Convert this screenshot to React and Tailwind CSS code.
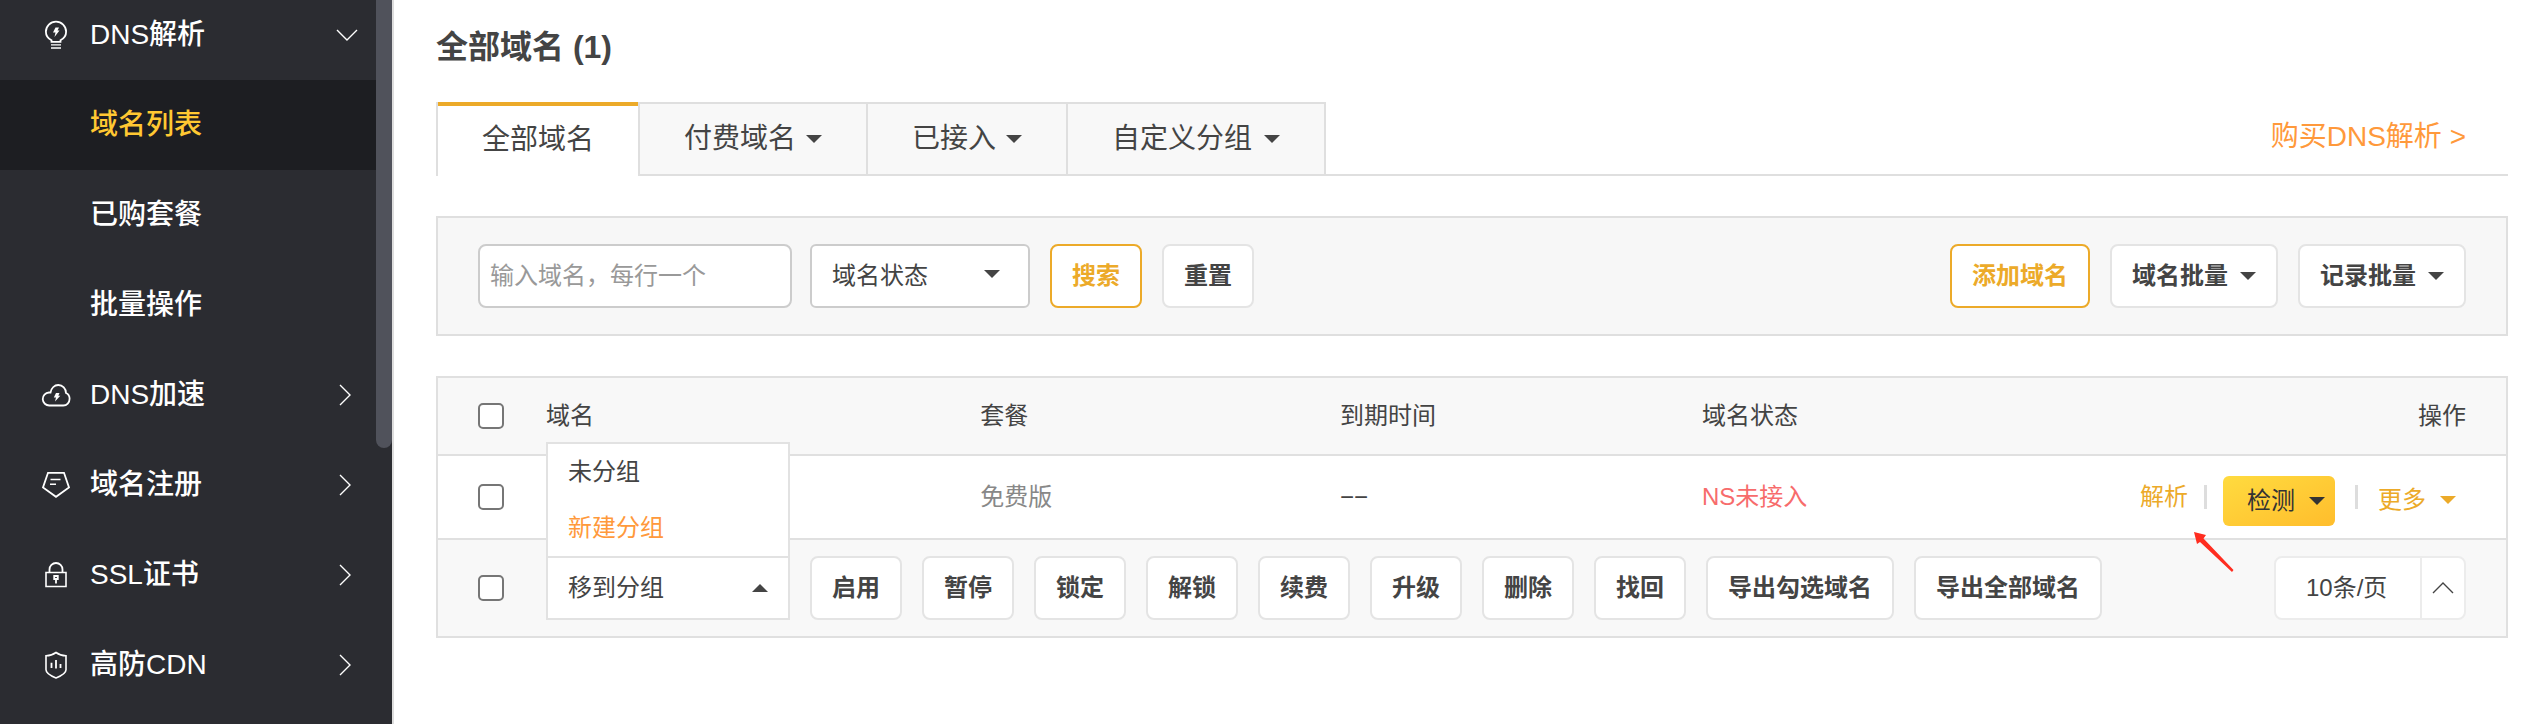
import React, { useState } from 'react'

const Caret = ({ up, className = '' }) => (
  <svg viewBox="0 0 16 8" className={`w-4 h-2 shrink-0 fill-current ${className}`} aria-hidden="true">
    <path d={up ? 'M0 8h16L8 0z' : 'M0 0h16L8 8z'} />
  </svg>
)

const Chevron = ({ points, className }) => (
  <svg viewBox="0 0 22 22" className={className} fill="none" stroke="currentColor" strokeWidth="1.4" aria-hidden="true">
    <polyline points={points} />
  </svg>
)

const Icon = ({ children }) => (
  <svg viewBox="0 0 30 30" className="size-[30px] mr-[19px]" fill="none" stroke="currentColor" strokeWidth="1.8" aria-hidden="true">
    {children}
  </svg>
)

const BulbIcon = () => (
  <Icon>
    <path d="M10.5 21.8v-1.6c-3.4-1.7-5.6-4.8-5.6-8.5a10.1 10.1 0 0 1 20.2 0c0 3.7-2.2 6.8-5.6 8.5v1.6z" />
    <path d="M10 24.8h10M10 28h10" strokeWidth="1.3" />
    <path d="M14.5 7.5h3.5l-1.5 3h2l-5 6.5 1-4.5h-2.5z" fill="currentColor" stroke="none" />
  </Icon>
)

const CloudIcon = () => (
  <Icon>
    <path d="M8.5 25.500a6.500 6.500 0 0 1-.5-13h1.500c.8-4.500 4-7.500 7.800-7.500 4.300 0 7.700 3.600 7.700 8 2.400 1 3.600 3.200 3.600 5.800 0 3.800-2.800 6.700-6.300 6.700z" />
    <path d="M15 13h3.500l-1.200 2.800h2L14 21.500l1-4h-2.200z" fill="currentColor" stroke="none" />
  </Icon>
)

const DomainIcon = () => (
  <Icon>
    <path d="M7 2.800h16l5 14.700L15 26.800 2 17.500z" />
    <path d="M9.500 9.500h10M9 14.200h6" strokeWidth="1.5" />
  </Icon>
)

const LockIcon = () => (
  <Icon>
    <path d="M5 12.500h20v14H5z" strokeWidth="1.6" />
    <path d="M8.500 12V9.500a6.500 6.500 0 0 1 13 0V12" />
    <path d="M13.200 16h3.600v3h-3.600zM15 19v4.500" />
  </Icon>
)

const ShieldIcon = () => (
  <Icon>
    <path d="M15 2.500c3 2.200 6.400 3.300 10 3.300v14c0 3.500-4.500 6-10 8.200-5.500-2.200-10-4.700-10-8.200v-14c3.600 0 7-1.100 10-3.300z" strokeWidth="1.6" />
    <path d="M10.500 12.800V18M15 10v8.500M19.500 14v4" />
  </Icon>
)

const menu = [
  { label: 'DNS加速', icon: CloudIcon },
  { label: '域名注册', icon: DomainIcon },
  { label: 'SSL证书', icon: LockIcon },
  { label: '高防CDN', icon: ShieldIcon },
]

const subMenu = ['域名列表', '已购套餐', '批量操作']

const tabs = [
  { label: '付费域名', gap: 'gap-2.5' },
  { label: '已接入', gap: 'gap-2.5' },
  { label: '自定义分组', gap: 'gap-3' },
]

const actions = ['启用', '暂停', '锁定', '解锁', '续费', '升级', '删除', '找回', '导出勾选域名', '导出全部域名']

const Button = ({ children, primary }) => (
  <button
    type="button"
    className={`h-16 px-5 flex items-center gap-3 shrink-0 whitespace-nowrap rounded-lg border-2 bg-white font-semibold ${
      primary ? 'border-[#ecaa29] text-[#ecaa29]' : 'border-[#e4e4e4]'
    }`}
  >
    {children}
  </button>
)

const Checkbox = ({ label }) => (
  <input
    type="checkbox"
    aria-label={label}
    className="block size-[26px] ml-10 appearance-none rounded-[5px] border-2 border-[#767676] bg-white checked:bg-[#ecaa29]"
  />
)

const Sidebar = () => (
  <aside className="flex shrink-0 bg-[#2b2c31] border-r-2 border-[#dddddd] text-white text-[28px] font-medium">
    <nav className="w-[376px]">
      <button type="button" className="w-full h-20 pl-[41px] pr-[18px] pb-2.5 flex items-center">
        <BulbIcon />
        DNS解析
        <Chevron points="1,6 11,16 21,6" className="size-[22px] ml-auto" />
      </button>
      {subMenu.map((item) => (
        <a
          key={item}
          href="#"
          className={`h-[90px] pl-[90px] flex items-center ${item === '域名列表' ? 'bg-[#1d1e22] text-[#ffc832]' : ''}`}
        >
          {item}
        </a>
      ))}
      {menu.map(({ label, icon: ItemIcon }) => (
        <button key={label} type="button" className="w-full h-[90px] pl-[41px] pr-5 flex items-center">
          <ItemIcon />
          {label}
          <Chevron points="6,1 16,11 6,21" className="size-[22px] ml-auto" />
        </button>
      ))}
    </nav>
    <div className="w-4 h-[448px] rounded-b-lg bg-[#50525b]" />
  </aside>
)

const Filters = () => (
  <form className="mt-10 h-[120px] px-10 flex items-center gap-5 border-2 border-[#dfdfdf] bg-[#f7f7f7]">
    <div className="flex gap-[18px]">
      <input
        type="text"
        aria-label="域名"
        placeholder="输入域名，每行一个"
        className="w-[314px] h-16 px-2.5 rounded-lg border-2 border-[#cccccc] bg-white placeholder:text-[#999999]"
      />
      <div className="relative">
        <select aria-label="域名状态" className="w-[220px] h-16 px-5 appearance-none rounded-md border-2 border-[#cccccc] bg-white">
          <option>域名状态</option>
        </select>
        <Caret className="absolute right-[30px] top-[26px] pointer-events-none" />
      </div>
    </div>
    <Button primary>搜索</Button>
    <Button>重置</Button>
    <div className="ml-auto flex gap-5">
      <Button primary>添加域名</Button>
      <Button>域名批量<Caret /></Button>
      <Button>记录批量<Caret /></Button>
    </div>
  </form>
)

const GroupSelect = () => {
  const [open, setOpen] = useState(true)

  return (
    <div className="relative w-[244px] shrink-0">
      <button
        type="button"
        aria-expanded={open}
        onClick={() => setOpen(!open)}
        className="w-full h-16 px-5 flex items-center justify-between border-2 border-[#e2e2e2] bg-white"
      >
        移到分组
        <Caret up={open} />
      </button>
      {open && (
        <ul className="absolute inset-x-0 bottom-[62px] border-2 border-[#e2e2e2] bg-white">
          <li><button type="button" className="w-full h-14 px-5 text-left">未分组</button></li>
          <li><button type="button" className="w-full h-14 px-5 text-left text-[#ff993b]">新建分组</button></li>
        </ul>
      )}
    </div>
  )
}

const DomainTable = () => (
  <div className="mt-10 border-2 border-[#e0e0e0]">
    <table className="w-full table-fixed border-separate border-spacing-0 text-left">
      <colgroup>
        <col className="w-[108px]" />
        <col className="w-[21%]" />
        <col className="w-[17.4%]" />
        <col className="w-[17.5%]" />
        <col />
        <col />
      </colgroup>
      <thead className="bg-[#f8f8f8]">
        <tr className="[&>th]:h-[78px] [&>th]:p-0 [&>th]:border-b-2 [&>th]:border-[#e0e0e0] [&>th]:font-normal">
          <th><Checkbox label="全选" /></th>
          <th>域名</th>
          <th>套餐</th>
          <th>到期时间</th>
          <th>域名状态</th>
          <th><div className="pr-10 text-right">操作</div></th>
        </tr>
      </thead>
      <tbody>
        <tr className="[&>td]:h-[84px] [&>td]:p-0 [&>td]:border-b-2 [&>td]:border-[#e0e0e0]">
          <td><Checkbox label="选择域名" /></td>
          <td></td>
          <td className="text-[#888888]">免费版</td>
          <td>−−</td>
          <td className="text-[#f76c6c]">NS未接入</td>
          <td>
            <div className="relative pr-[50px] flex items-center justify-end text-[#ecaa29]">
              <a href="#">解析</a>
              <span className="w-[3px] h-6 mx-4 bg-[#dddddd]" />
              <button
                type="button"
                className="h-[50px] mt-2 pl-6 pr-2.5 flex items-center gap-3.5 rounded-md bg-linear-to-br from-[#ffdb3f] to-[#ffbd2c] text-[#333333]"
              >
                检测
                <Caret />
              </button>
              <span className="w-[3px] h-6 mx-5 bg-[#dddddd]" />
              <button type="button" className="mt-1.5 flex items-center gap-3.5">
                更多
                <Caret />
              </button>
              <svg viewBox="0 0 40 40" className="absolute right-[272px] top-16 size-10 fill-[#ff2d20]" aria-hidden="true">
                <path d="M0 0L12 3 9.500 6.500 39.500 38 38 40 6 10 3 12z" />
              </svg>
            </div>
          </td>
        </tr>
      </tbody>
      <tfoot className="bg-[#f8f8f8]">
        <tr className="[&>td]:h-24 [&>td]:p-0">
          <td><Checkbox label="全选本页" /></td>
          <td colSpan={5}>
            <div className="pr-10 flex items-center gap-5">
              <GroupSelect />
              {actions.map((action) => (
                <Button key={action}>{action}</Button>
              ))}
              <div className="ml-auto h-16 flex rounded-lg border-2 border-[#ececec] bg-white">
                <select aria-label="每页条数" className="w-36 pl-[30px] appearance-none">
                  <option>10条/页</option>
                </select>
                <button type="button" aria-label="展开" className="w-11 flex items-center justify-center border-l-2 border-[#ececec]">
                  <Chevron points="1,16 11,6 21,16" className="size-[22px]" />
                </button>
              </div>
            </div>
          </td>
        </tr>
      </tfoot>
    </table>
  </div>
)

export default function App() {
  return (
    <div className="min-h-screen flex bg-white text-[#444444] text-2xl font-['Liberation_Sans','Noto_Sans_CJK_SC',sans-serif]">
      <Sidebar />
      <main className="flex-1 min-w-0 pl-[42px] pr-9">
        <h1 className="h-[102px] pb-2 flex items-center text-[32px] font-bold">全部域名 (1)</h1>
        <div className="h-[74px] flex text-[28px]">
          <button type="button" className="w-[202px] pb-0.5 border-l-2 border-[#dfdfdf]">
            <span className="h-full flex items-center justify-center border-t-4 border-[#ecaa29]">全部域名</span>
          </button>
          {tabs.map(({ label, gap }) => (
            <button
              key={label}
              type="button"
              className={`px-11 flex items-center border-l-2 border-y-2 last-of-type:border-r-2 border-[#dfdfdf] bg-[#f8f8f8] ${gap}`}
            >
              {label}
              <Caret />
            </button>
          ))}
          <div className="flex-1 pr-[42px] pb-0.5 flex items-center justify-end border-b-2 border-[#dfdfdf]">
            <a href="#" className="text-[#ff993b]">购买DNS解析 &gt;</a>
          </div>
        </div>
        <Filters />
        <DomainTable />
      </main>
    </div>
  )
}
